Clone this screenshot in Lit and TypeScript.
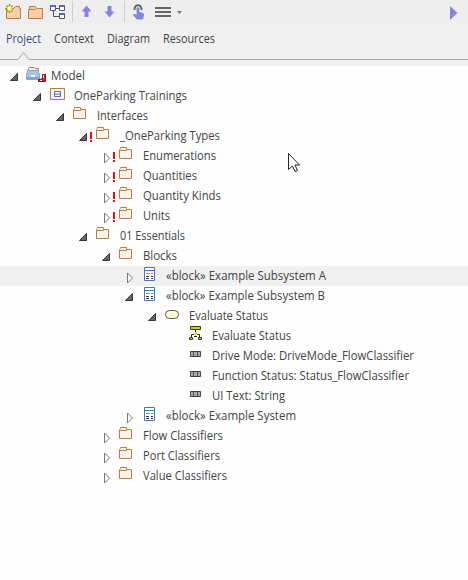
import { LitElement, html, svg, css, nothing } from "lit";
import { customElement } from "lit/decorators.js";

type Icon = "model" | "package" | "folder" | "block" | "activity" | "diagram" | "port";
interface Node {
  level: number;
  icon: Icon;
  label: string;
  width: number;
  state?: "open" | "closed";
  flagged?: boolean;
  selected?: boolean;
}

const nodes: Node[] = [
  { level: 0, icon: "model", label: "Model", width: 34, state: "open" },
  { level: 1, icon: "package", label: "OneParking Trainings", width: 113, state: "open" },
  { level: 2, icon: "folder", label: "Interfaces", width: 51, state: "open" },
  { level: 3, icon: "folder", label: "_OneParking Types", width: 100, state: "open", flagged: true },
  { level: 4, icon: "folder", label: "Enumerations", width: 73, state: "closed", flagged: true },
  { level: 4, icon: "folder", label: "Quantities", width: 54, state: "closed", flagged: true },
  { level: 4, icon: "folder", label: "Quantity Kinds", width: 78, state: "closed", flagged: true },
  { level: 4, icon: "folder", label: "Units", width: 27, state: "closed", flagged: true },
  { level: 3, icon: "folder", label: "01 Essentials", width: 65, state: "open" },
  { level: 4, icon: "folder", label: "Blocks", width: 34, state: "open" },
  { level: 5, icon: "block", label: "«block» Example Subsystem A", width: 160, state: "closed", selected: true },
  { level: 5, icon: "block", label: "«block» Example Subsystem B", width: 159, state: "open" },
  { level: 6, icon: "activity", label: "Evaluate Status", width: 79, state: "open" },
  { level: 7, icon: "diagram", label: "Evaluate Status", width: 79 },
  { level: 7, icon: "port", label: "Drive Mode: DriveMode_FlowClassifier", width: 202 },
  { level: 7, icon: "port", label: "Function Status: Status_FlowClassifier", width: 197 },
  { level: 7, icon: "port", label: "UI Text: String", width: 73 },
  { level: 5, icon: "block", label: "«block» Example System", width: 130, state: "closed" },
  { level: 4, icon: "folder", label: "Flow Classifiers", width: 80, state: "closed" },
  { level: 4, icon: "folder", label: "Port Classifiers", width: 77, state: "closed" },
  { level: 4, icon: "folder", label: "Value Classifiers", width: 84, state: "closed" },
];

const tabs = [
  { label: "Project", width: 35, active: true },
  { label: "Context", width: 40 },
  { label: "Diagram", width: 43 },
  { label: "Resources", width: 52 },
];

const icons = {
  model: svg`
    <path d="M28.5 5V2.5l1-1h5l1 1h3V5" fill="#fff0e6" stroke="#b5803f"/>
    <path d="M27.5 4.5h11v3h1v6h-13v-6h1z" fill="#a9c4e2" stroke="#86a9d3"/>
    <path d="M27 11h12v2H27z" fill="#7ea3cc"/><path d="M31 9h4v2h-4z" fill="#fff"/>
    <path d="M42.500 8.500h3v7h-7v-2h2.500l1.500-2z" fill="#d2202e" stroke="#7a1420"/>
    <path d="M43 9h1v3h-1zM40 14h2v1h-2z" fill="#fff"/>`,
  package: svg`
    <path d="M27.5 2.5h14v11h-14z" fill="#fff3eb" stroke="#b5803f"/>
    <path d="M31.5 5.500h6v5h-6zM31.5 8h6" fill="#fff" stroke="#4c70bf"/>`,
  folder: svg`
    <path d="M27.5 12.5v-9l1-1v-1h6v2h5v9z" fill="#fff1ec" stroke="#b5803f"/>
    <path d="M28 4.500h6.500l1-1" fill="none" stroke="#b5803f"/>`,
  block: svg`
    <path d="M29.500 1.500h10v13h-10z" fill="#fff" stroke="#4472c4"/>
    <path d="M30 4.500h9" stroke="#4472c4"/>
    <path d="M31 7.500h4m1 0h2" stroke="#e06a62"/>
    <path d="M31 10.500h3m2 0h2M31 12.500h3m2 0h2" stroke="#333"/>`,
  activity: svg`<rect x="27.500" y="4.500" width="13" height="8" rx="4" fill="#fff8d6" stroke="#555"/>`,
  diagram: svg`
    <path d="M29.500 .5h10v3h-10zM28.500 11.500h3v2h-3zM37.500 11.500h3v2h-3z" fill="#d3ce16" stroke="#37371c"/>
    <path d="M34.500 4v2M30.500 11V8.500h2l2-2 2 2h2V11" fill="none" stroke="#222"/>
    <path d="M34.500 6l2 2-2 2-2-2z" fill="#e0db20"/>
    <path d="M33 10.500h3" stroke="#222"/>`,
  port: svg`
    <path d="M29.500 5.500h10v5h-10z" fill="#aaa" stroke="#444"/>
    <path d="M32.500 6v4M36.500 6v4" stroke="#555"/>`,
};

@customElement("app-root")
export class AppRoot extends LitElement {
  static styles = css`
    :host {
      display: block;
      position: relative;
      width: 468px;
      height: 580px;
      overflow: hidden;
      background: #fdfdfd;
      color: #444;
      font: 12px/20px "Open Sans", "Noto Sans", sans-serif;
    }
    svg { display: block; flex: none; }
    .toolbar { height: 24px; background: #eeeeee; }
    .tabs {
      display: flex;
      gap: 13px;
      height: 35px;
      padding-left: 6px;
      box-sizing: border-box;
      padding-top: 5px;
      background: #f0f0f0;
    }
    .tab.active { color: #35507c; }
    .rule { display: flow-root; height: 7px; background: #f0f0f0; }
    .notch { margin-top: -8px; }
    .row { display: flex; height: 20px; }
    .row.selected { background: #f0f0f0; }
    .label { display: block; overflow: visible; }
    .label text { fill: currentColor; }
    .pointer { position: absolute; left: 287px; top: 152px; }
  `;

  private label(text: string, width: number) {
    return html`<svg class="label" width=${width} height="20">
      <text x="0" y="14" textLength=${width} lengthAdjust="spacingAndGlyphs">${text}</text>
    </svg>`;
  }

  private row(n: Node) {
    return html`<div class="row ${n.selected ? "selected" : ""}" style="padding-left:${n.level * 23}px">
      <svg width="51" height="20">
        ${n.state === "open"
          ? svg`<path d="M17.500 7.500v7h-7z" fill="#666" stroke="#333"/>`
          : n.state === "closed"
            ? svg`<path d="M12.500 7v10l5-5z" fill="#fff" stroke="#777"/>`
            : nothing}
        ${n.flagged ? svg`<path d="M21 6h2v7h-2zM21 14h2v2h-2z" fill="#f20d0d"/>` : nothing}
        ${icons[n.icon]}
      </svg>
      ${this.label(n.label, n.width)}
    </div>`;
  }

  render() {
    return html`
      <div class="toolbar">
        <svg width="468" height="24">
          <path d="M6.500 18.500v-10h7l2-2h4v2h1v10z" fill="#f6d0ae" stroke="#b5803f"/>
          <path d="M9.500 4v9M5 8.500h9M6.500 5.500l6 6M12.500 5.500l-6 6" stroke="#a69c00" stroke-width="1.500"/>
          <circle cx="9.500" cy="8.500" r="2.200" fill="#fffbd0"/>
          <path d="M28.500 18.500v-9l1-1v-2h6l1 2h6v10zM29 9.500h6l1-1" fill="#f6d0ae" stroke="#b5803f"/>
          <path d="M55 8.500h5M53.500 10v6.500h6" fill="none" stroke="#555"/>
          <g fill="#fff" stroke="#555">
            <path d="M50.500 5.500h5v5h-5zM59.500 5.500h5v5h-5zM59.500 13.500h5v5h-5z"/>
            <path d="M50 6h6M59 6h6M59 14h6" stroke="#4670b5" stroke-width="2"/>
          </g>
          <path d="M72.500 1v21M124.500 1v21" stroke="#cecece"/>
          <path d="M86.500 5.500l5 6h-3V17h-4v-5.500h-3z" fill="#8585dc"/>
          <path d="M109.500 17.500l-5-6h3V6h4v5.500h3z" fill="#8585dc"/>
          <path d="M134.700 10a3.500 3.500 0 1 1 6.600 0" fill="none" stroke="#666" stroke-width="2"/>
          <path d="M136.500 8q1.500-1.500 3 0v4l3.500 1q1.500.5 1 2l-1 4.500h-6l-4-4.500q0-1.500 1.500-1l2 1z" fill="#8585dc"/>
          <path d="M155 8h16M155 12h16M155 16h16" stroke="#666" stroke-width="2"/>
          <path d="M177 11h5l-2.500 3z" fill="#777"/>
          <path d="M450 6l7.500 7-7.500 7z" fill="#8585dc"/>
        </svg>
      </div>
      <div class="tabs">
        ${tabs.map((t) => html`<div class="tab ${t.active ? "active" : ""}">${this.label(t.label, t.width)}</div>`)}
      </div>
      <div class="rule">
        <svg class="notch" width="468" height="10">
          <path d="M0 8.500h18l5.500-7 5.500 7h439" fill="none" stroke="#a8a8a8"/>
        </svg>
      </div>
      <div class="tree">${nodes.map((n) => this.row(n))}</div>
      <svg class="pointer" width="14" height="22">
        <path d="M1.500 1.500v16l4-3.500 2.500 5.500 2.500-1-2.500-5.500h4.500z" fill="#fff" stroke="#223"/>
      </svg>
    `;
  }
}
